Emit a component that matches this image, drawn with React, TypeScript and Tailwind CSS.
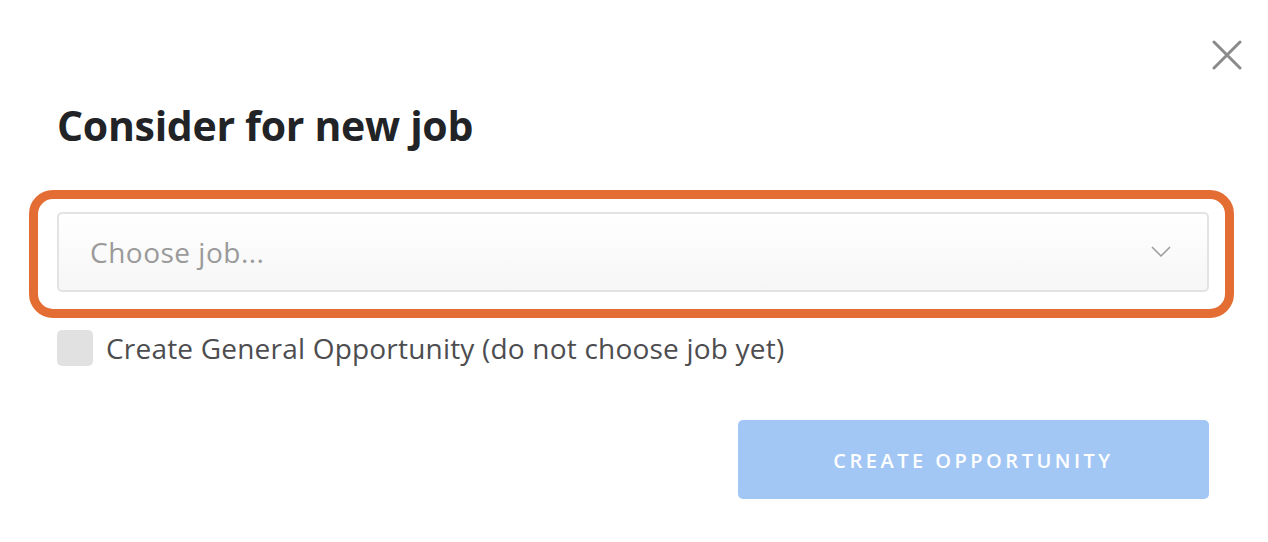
import React from "react";

export default function App() {
  return (
    <div className="relative w-[1268px] h-[542px] bg-white overflow-hidden" style={{ fontFamily: '"Open Sans", "Noto Sans", sans-serif' }}>
      <button className="absolute left-[1211px] top-[39px] w-[32px] h-[32px] flex items-center justify-center" aria-label="Close">
        <svg width="30" height="30" viewBox="0 0 30 30" fill="none">
          <path d="M2 2 L28 28 M28 2 L2 28" stroke="#8a8a8a" strokeWidth="3" strokeLinecap="round" />
        </svg>
      </button>
      <div className="flex flex-col pl-[29px] pt-[101px]">
        <h1 className="ml-[28px] text-[41px] leading-[48px] font-bold text-[#222326] tracking-[-0.3px]">Consider for new job</h1>
        <div className="mt-[41px] w-[1205px] h-[128px] border-[9px] border-[#e36d33] rounded-[24px] pl-[19px] pr-[16px] pt-[13px]">
          <div className="h-[80px] w-[1152px] rounded-[5px] border-2 border-[#e3e3e3] bg-gradient-to-b from-white to-[#f6f6f6] flex items-center justify-between pl-[31px] pr-[36px]">
            <span className="text-[28px] tracking-[0.5px] text-[#9a9a9a]">Choose job...</span>
            <svg width="20" height="12" viewBox="0 0 20 12" fill="none">
              <path d="M1 1 L10 10 L19 1" stroke="#9a9a9a" strokeWidth="1.5" />
            </svg>
          </div>
        </div>
        <label className="mt-[12px] ml-[28px] h-[36px] flex items-center gap-[13px]">
          <span className="w-[36px] h-[36px] rounded-[5px] bg-[#e1e1e1]" />
          <span className="text-[28px] leading-[36px] tracking-[0.2px] text-[#4d4d50]">Create General Opportunity (do not choose job yet)</span>
        </label>
        <div className="mt-[54px] ml-[709px]">
          <button className="w-[471px] h-[79px] pt-[2px] rounded-[5px] bg-[#a3c7f5] text-white text-[20px] font-semibold tracking-[3.5px] flex items-center justify-center">
            CREATE OPPORTUNITY
          </button>
        </div>
      </div>
    </div>
  );
}
